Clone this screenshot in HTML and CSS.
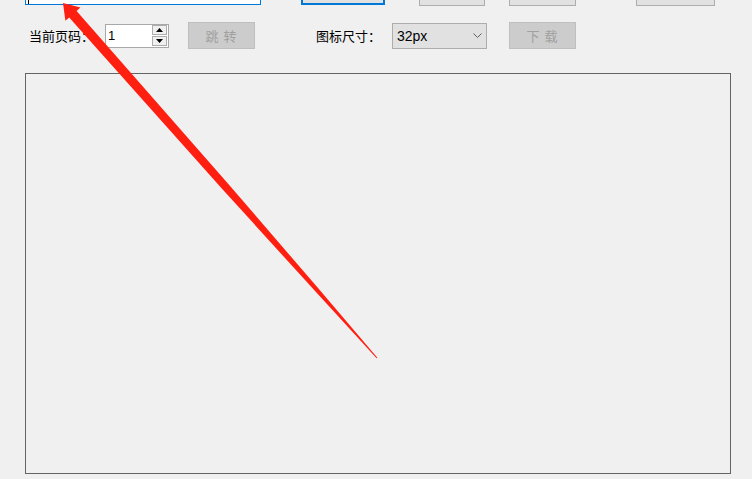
FILE: index.html
```html
<!doctype html>
<html>
<head>
    <meta charset="UTF-8">
    <title>图标下载</title>
    <link rel="stylesheet" href="styles.css">
</head>
<body>
    <div class="toolbar top">
        <div class="text-box"><span class="caret"></span></div>
        <button class="btn focused"></button>
        <button class="btn b2"></button>
        <button class="btn b3"></button>
        <button class="btn b4"></button>
    </div>

    <div class="toolbar pager">
        <span class="label">当前页码：</span>
        <div class="spin">
            <span class="spin-value">1</span>
            <div class="spin-buttons">
                <span class="spin-btn">
                    <svg width="7" height="4" viewBox="0 0 7 4"><polygon points="3.5,0 7,4 0,4" fill="#000"/></svg>
                </span>
                <span class="spin-btn">
                    <svg width="7" height="4" viewBox="0 0 7 4"><polygon points="0,0 7,0 3.5,4" fill="#000"/></svg>
                </span>
            </div>
        </div>
        <button class="btn disabled jump">跳&nbsp;转</button>

        <span class="label size-label">图标尺寸：</span>
        <div class="combo">
            <span>32px</span>
            <svg width="9" height="5" viewBox="0 0 9 5"><polyline points="0.5,0.5 4.5,4.5 8.5,0.5" fill="none" stroke="#606060" stroke-width="1"/></svg>
        </div>
        <button class="btn disabled download">下&nbsp;载</button>
    </div>

    <div class="panel"></div>

    <svg class="annotation" width="752" height="479" viewBox="0 0 752 479">
        <polygon fill="#ff1f10" points="63,3 80.4,7.6 76.6,10.9 227.9,183.5 317.8,287.8 377.4,357.7 376.6,358.3 314.6,290.6 222,188.7 69.2,17.5 65.4,20.8"/>
    </svg>
</body>
</html>
```

FILE: styles.css
```css
html, body {
    margin: 0;
    height: 100%;
}

body {
    background-color: #f0f0f0;
    font-family: "Noto Sans CJK SC", "Liberation Sans", sans-serif;
    font-size: 13px;
    color: #000;
    overflow: hidden;
}

.toolbar {
    display: flex;
}

.top {
    height: 6px;
    align-items: flex-end;
    overflow: hidden;
}

.text-box {
    margin-left: 25px;
    margin-bottom: 1px;
    width: 236px;
    height: 23px;
    box-sizing: border-box;
    border: 1px solid #0078d7;
    background-color: #fff;
    display: flex;
    align-items: flex-end;
}

.caret {
    width: 1px;
    height: 14px;
    margin-left: 2px;
    background-color: #000;
}

.btn {
    box-sizing: border-box;
    height: 27px;
    padding: 0;
    border: 1px solid #adadad;
    background-color: #e1e1e1;
    font-family: "Noto Sans CJK SC", sans-serif;
    font-size: 13px;
}

.top .btn {
    height: 23px;
}

.focused {
    margin-left: 40px;
    margin-bottom: 1px;
    width: 84px;
    border: 2px solid #0078d7;
}

.b2 {
    margin-left: 34px;
    width: 66px;
}

.b3 {
    margin-left: 24px;
    width: 67px;
}

.b4 {
    margin-left: 60px;
    width: 79px;
}

.pager {
    margin-top: 16px;
    height: 27px;
    align-items: center;
}

.label {
    margin-left: 29px;
    width: 76px;
    line-height: 16px;
}

.spin {
    box-sizing: border-box;
    width: 64px;
    height: 24px;
    border: 1px solid #a8a8a8;
    background-color: #fff;
    display: flex;
    align-items: center;
    justify-content: space-between;
}

.spin-value {
    margin-left: 2px;
    font-family: "Liberation Sans", sans-serif;
    font-size: 13px;
}

.spin-buttons {
    display: flex;
    flex-direction: column;
    gap: 1px;
    margin-right: 1px;
}

.spin-btn {
    box-sizing: border-box;
    width: 15px;
    height: 10px;
    border: 1px solid #adadad;
    background-color: #f0f0f0;
    display: flex;
    align-items: center;
    justify-content: center;
}

.disabled {
    background-color: #cccccc;
    border-color: #bfbfbf;
    color: #a0a0a0;
    width: 67px;
    letter-spacing: 1px;
}

.jump {
    margin-left: 19px;
}

.size-label {
    margin-left: 61px;
}

.combo {
    box-sizing: border-box;
    width: 95px;
    height: 26px;
    border: 1px solid #adadad;
    background-color: #e1e1e1;
    display: flex;
    align-items: center;
    justify-content: space-between;
    padding: 0 4px 0 4px;
    font-family: "Liberation Sans", sans-serif;
    font-size: 14px;
}

.download {
    margin-left: 22px;
}

.panel {
    margin: 24px 0 0 25px;
    width: 706px;
    height: 401px;
    box-sizing: border-box;
    border: 1px solid #646464;
}

.annotation {
    position: absolute;
    left: 0;
    top: 0;
    pointer-events: none;
}
```
